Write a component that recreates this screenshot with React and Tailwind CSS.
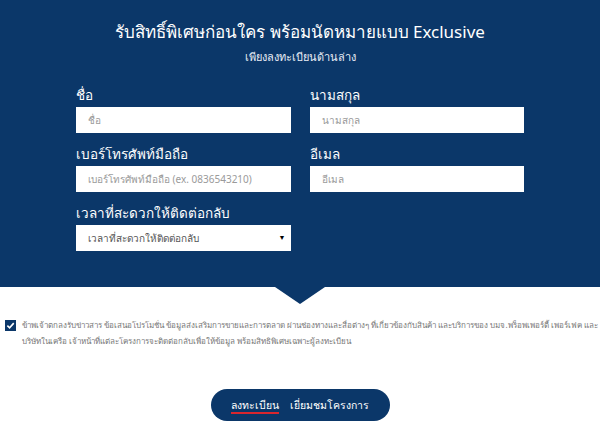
import React from "react";

const font = { fontFamily: '"Noto Sans", "Liberation Sans", sans-serif' };

function Field({ label, placeholder }) {
  return (
    <div className="flex flex-col">
      <div className="h-[20px] text-[13.5px] leading-[20px] text-white mb-[2px]">{label}</div>
      <div className="h-[26px] bg-white flex items-center px-[12px] text-[10px] text-[#9a9a9a]">
        {placeholder}
      </div>
    </div>
  );
}

export default function App() {
  return (
    <div className="w-[600px] h-[435px] bg-white overflow-hidden" style={font}>
      <div className="bg-[#0b3769] pt-[20px] pb-[36px]">
        <div className="text-center text-white text-[17px] leading-[24px]">
          รับสิทธิ์พิเศษก่อนใคร พร้อมนัดหมายแบบ Exclusive
        </div>
        <div className="text-center text-[#e8edf5] text-[11px] leading-[18px] mt-[4px] font-light">
          เพียงลงทะเบียนด้านล่าง
        </div>
        <div className="mx-auto w-[448px] mt-[19px] grid grid-cols-2 gap-x-[19px] gap-y-[11px]">
          <Field label="ชื่อ" placeholder="ชื่อ" />
          <Field label="นามสกุล" placeholder="นามสกุล" />
          <Field label="เบอร์โทรศัพท์มือถือ" placeholder="เบอร์โทรศัพท์มือถือ (ex. 0836543210)" />
          <Field label="อีเมล" placeholder="อีเมล" />
          <div className="flex flex-col">
            <div className="h-[20px] text-[13.5px] leading-[20px] text-white mb-[2px]">เวลาที่สะดวกให้ติดต่อกลับ</div>
            <div className="h-[26px] bg-white flex items-center justify-between pl-[12px] pr-[5px] text-[10px] text-[#555]">
              <span>เวลาที่สะดวกให้ติดต่อกลับ</span>
              <span className="text-[7px] text-black">▼</span>
            </div>
          </div>
        </div>
      </div>
      <div className="flex justify-center">
        <div className="w-0 h-0 border-l-[25px] border-r-[25px] border-t-[17px] border-l-transparent border-r-transparent border-t-[#0b3769]" />
      </div>
      <div className="flex items-start gap-[6px] pl-[5px] pr-[4px] mt-[15px]">
        <div className="w-[11px] h-[11px] bg-[#0b3769] flex items-center justify-center shrink-0 mt-[1px]">
          <svg width="9" height="9" viewBox="0 0 10 10">
            <path d="M1.5 5.2 L4 7.6 L8.6 2.4" stroke="white" strokeWidth="1.8" fill="none" />
          </svg>
        </div>
        <div className="text-[8px] leading-[16px] text-[#777] -mt-[2px] whitespace-nowrap">
          <div>ข้าพเจ้าตกลงรับข่าวสาร ข้อเสนอโปรโมชั่น ข้อมูลส่งเสริมการขายและการตลาด ผ่านช่องทางและสื่อต่างๆ ที่เกี่ยวข้องกับสินค้า และบริการของ บมจ.พร็อพเพอร์ตี้ เพอร์เฟค และ</div>
          <div>บริษัทในเครือ เจ้าหน้าที่แต่ละโครงการจะติดต่อกลับเพื่อให้ข้อมูล พร้อมสิทธิพิเศษเฉพาะผู้ลงทะเบียน</div>
        </div>
      </div>
      <div className="flex justify-center mt-[40px]">
        <div className="w-[179px] h-[32px] rounded-full bg-[#0b3769] flex items-center justify-center gap-[11px] text-white text-[10.5px]">
          <span className="border-b-2 border-[#d9262e] leading-[14px] pt-[2px]">ลงทะเบียน</span>
          <span className="leading-[14px]">เยี่ยมชมโครงการ</span>
        </div>
      </div>
    </div>
  );
}
